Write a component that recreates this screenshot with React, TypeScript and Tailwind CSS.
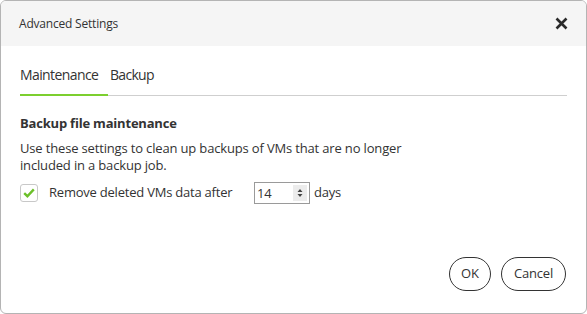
import React from "react";

export default function App() {
  return (
    <div className="w-[587px] h-[314px] bg-white" style={{ fontFamily: '"Open Sans", "Noto Sans", sans-serif' }}>
      <div className="w-full h-full border border-[#b4b4b4] rounded-[6px] overflow-hidden flex flex-col text-[#333]">
        <div className="h-[45px] bg-[#f5f5f5] flex items-center justify-between pl-[18px] pr-[18px] shrink-0">
          <span className="text-[12px] tracking-[-0.2px] text-[#333]">Advanced Settings</span>
          <svg width="13" height="13" viewBox="0 0 13 13">
            <path d="M1.5 1.5 L11.5 11.5 M11.5 1.5 L1.5 11.5" stroke="#2a2a2a" strokeWidth="2.6" strokeLinecap="butt" />
          </svg>
        </div>
        <div className="flex-1 flex flex-col px-[19px]">
          <div className="flex border-b border-[#cfcfcf] mt-[19px] h-[31px]">
            <div className="relative text-[14px] tracking-[-0.6px] leading-[20px] text-[#333] pr-[14px] w-[88px] whitespace-nowrap">
              Maintenance
              <div className="absolute left-0 right-0 -bottom-[1px] h-[2px] bg-[#7ccf2f]" />
            </div>
            <div className="text-[14px] tracking-[-0.7px] leading-[20px] text-[#333] ml-[2px]">Backup</div>
          </div>
          <div className="mt-[18px] text-[13px] tracking-[-0.2px] font-bold text-[#333] leading-[18px]">Backup file maintenance</div>
          <div className="mt-[8px] text-[13px] tracking-[-0.16px] leading-[17px] text-[#333]">
            Use these settings to clean up backups of VMs that are no longer
            <br />
            included in a backup job.
          </div>
          <div className="mt-[8px] flex items-center h-[22px]">
            <div className="w-[18px] h-[18px] border border-[#c8c8c8] rounded-[3px] flex items-center justify-center mr-[11px]">
              <svg width="12" height="10" viewBox="0 0 12 10">
                <path d="M1.2 5.2 L4.4 8.2 L10.8 1.4" stroke="#6cc02a" strokeWidth="2.4" fill="none" />
              </svg>
            </div>
            <span className="text-[13px] tracking-[-0.22px] w-[205px]">Remove deleted VMs data after</span>
            <div className="w-[56px] h-[22px] border border-[#9a9a9a] flex items-center justify-between pl-[2px] pr-[2px]">
              <span className="text-[13px] tracking-[-0.2px] leading-none">14</span>
              <div className="w-[14px] h-[16px] bg-[#ececec] flex items-center justify-center">
                <svg width="6" height="10" viewBox="0 0 6 10">
                  <path d="M0.5 4 L3 1 L5.5 4 Z M0.5 6 L3 9 L5.5 6 Z" fill="#444" />
                </svg>
              </div>
            </div>
            <span className="text-[13px] tracking-[-0.2px] ml-[4px]">days</span>
          </div>
          <div className="flex-1" />
          <div className="flex justify-end gap-[10px] mb-[22px] mr-[1px]">
            <button className="h-[34px] w-[42px] rounded-full border border-[#333] text-[13px] text-[#333] bg-white">OK</button>
            <button className="h-[34px] w-[65px] rounded-full border border-[#333] text-[13px] tracking-[-0.2px] text-[#333] bg-white">Cancel</button>
          </div>
        </div>
      </div>
    </div>
  );
}
